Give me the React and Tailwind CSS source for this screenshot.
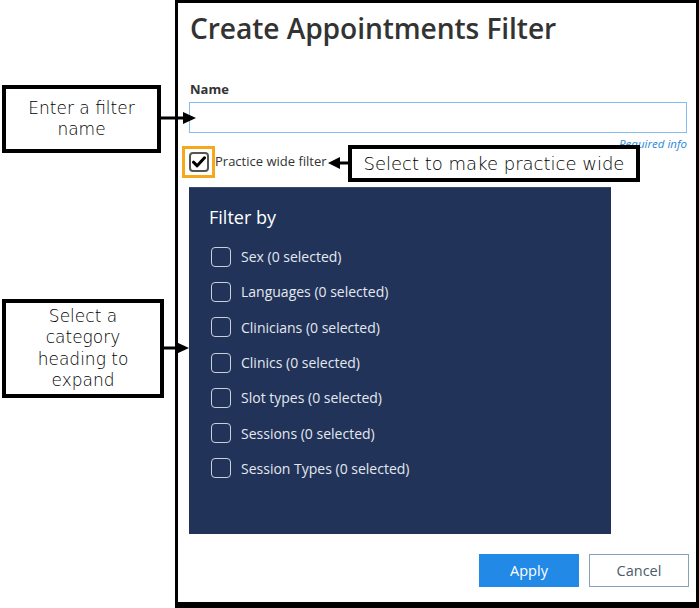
import React from "react";

const items = [
  "Sex (0 selected)",
  "Languages (0 selected)",
  "Clinicians (0 selected)",
  "Clinics (0 selected)",
  "Slot types (0 selected)",
  "Sessions (0 selected)",
  "Session Types (0 selected)",
];

function ArrowRight({ className, width, height }) {
  return (
    <svg className={className} width={width} height={height} viewBox={`0 0 ${width} ${height}`}>
      <rect x="0" y={height / 2 - 1.5} width={width - 10} height="3" fill="#000" />
      <polygon points={`${width - 13},0 ${width},${height / 2} ${width - 13},${height}`} fill="#000" />
    </svg>
  );
}

function ArrowLeft({ className, width, height }) {
  return (
    <svg className={className} width={width} height={height} viewBox={`0 0 ${width} ${height}`}>
      <rect x="9" y={height / 2 - 1.5} width={width - 9} height="3" fill="#000" />
      <polygon points={`12,0 0,${height / 2} 12,${height}`} fill="#000" />
    </svg>
  );
}

export default function App() {
  return (
    <div className="relative w-[699px] h-[608px] bg-white overflow-hidden font-['Open_Sans',sans-serif]">
      <div className="flex pl-[175px]">
        <div className="w-[524px] h-[608px] border-l-[3px] border-t-[3px] border-r-[3px] border-b-[6px] border-black pl-[11px] pr-[7px] flex flex-col">
          <h1 className="mt-[7px] ml-[1px] text-[28.2px] leading-[36px] font-semibold text-[#333333] tracking-[-0.1px]">
            Create Appointments Filter
          </h1>
          <div className="mt-[35px] ml-[1px] text-[13px] leading-[16px] font-bold text-[#333333]">Name</div>
          <input
            className="mt-[5px] mr-[2px] h-[31px] border border-[#84bcef] outline-none bg-white"
            type="text"
          />
          <div className="mt-[4px] mr-[2px] h-[13px] text-right text-[11.5px] leading-[13px] italic text-[#2b88d8]">
            Required info
          </div>
          <div className="mt-[-4px] h-[32px] flex items-center">
            <div className="relative w-[20px] h-[20px] rounded-[4px] border-2 border-[#555555] flex items-center justify-center bg-white">
              <div className="absolute -left-[9px] -top-[8px] w-[33px] h-[32px] border-[3px] border-[#f5a81e]" />
              <svg width="14" height="12" viewBox="0 0 14 12">
                <path d="M1.5 6.2 L5.2 9.8 L12.5 1.8" fill="none" stroke="#000" strokeWidth="3" strokeLinecap="round" strokeLinejoin="round" />
              </svg>
            </div>
            <span className="ml-[6px] text-[13px] text-[#333333]">Practice wide filter</span>
          </div>
          <div className="mt-[9px] w-[422px] h-[347px] bg-[#213359] pt-[17px] pl-[20px] flex flex-col border-t border-[#3a4b70]">
            <div className="text-[18px] leading-[24px] text-white">Filter by</div>
            <div className="mt-[10px] pl-[2px] flex flex-col">
              {items.map((t) => (
                <div key={t} className="h-[35.3px] flex items-center">
                  <div className="w-[20px] h-[20px] rounded-[4px] border-[1.5px] border-[#c9d0dc]" />
                  <span className="ml-[10px] text-[14px] text-[#e4e8ef]">{t}</span>
                </div>
              ))}
            </div>
          </div>
          <div className="mt-[20px] flex justify-end gap-[10px]">
            <button className="w-[100px] h-[33px] bg-[#2289e6] text-white text-[14.5px]">Apply</button>
            <button className="w-[100px] h-[33px] border-[1.5px] border-[#8a9fba] bg-white text-[#4b5b6b] text-[14.5px]">
              Cancel
            </button>
          </div>
        </div>
      </div>

      {/* Annotation callouts */}
      <div className="absolute left-[2px] top-[85px] w-[159px] h-[68px] border-[4px] border-black bg-white flex flex-col items-center justify-center font-['DejaVu_Sans',sans-serif] font-light text-[17px] leading-[21px] text-black">
        <span>Enter a filter</span>
        <span>name</span>
      </div>
      <ArrowRight className="absolute left-[161px] top-[112px]" width={35} height={12} />

      <div className="absolute left-[2px] top-[299px] w-[162px] h-[99px] border-[4px] border-black bg-white flex flex-col items-center justify-center font-['DejaVu_Sans',sans-serif] font-light text-[17px] leading-[21.5px] text-black">
        <span>Select a</span>
        <span>category</span>
        <span>heading to</span>
        <span>expand</span>
      </div>
      <ArrowRight className="absolute left-[164px] top-[342px]" width={25} height={12} />

      <div className="absolute left-[348px] top-[145px] w-[292px] h-[37px] border-[4px] border-black bg-white flex items-center justify-center font-['DejaVu_Sans',sans-serif] font-light text-[18px] text-black">
        Select to make practice wide
      </div>
      <ArrowLeft className="absolute left-[328px] top-[157px]" width={21} height={12} />
    </div>
  );
}
